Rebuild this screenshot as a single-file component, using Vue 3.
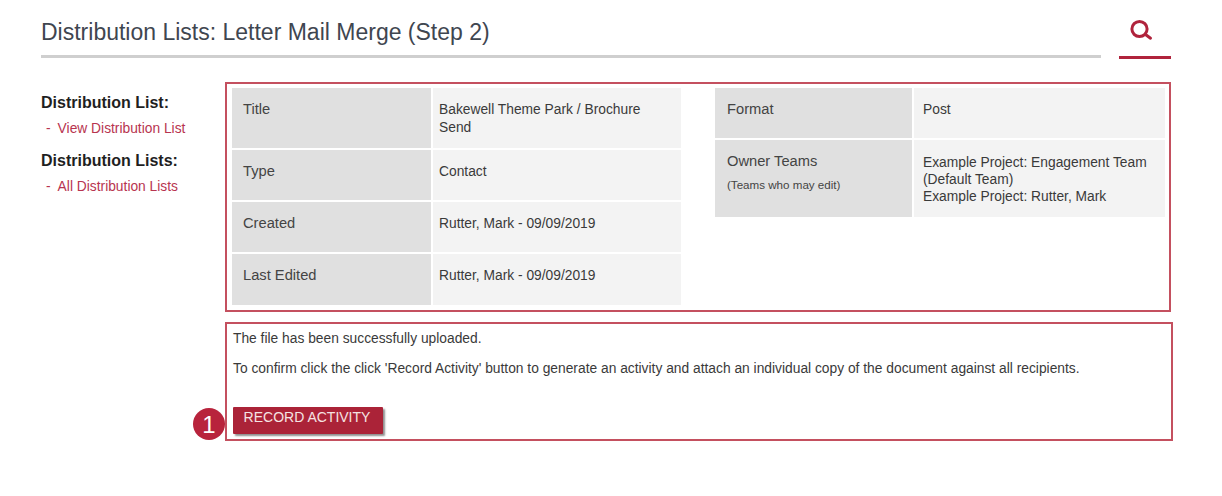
<script setup>
const leftRows = [
  { label: 'Title', value: ['Bakewell Theme Park / Brochure', 'Send'], height: 60 },
  { label: 'Type', value: ['Contact'], height: 50 },
  { label: 'Created', value: ['Rutter, Mark - 09/09/2019'], height: 50 },
  { label: 'Last Edited', value: ['Rutter, Mark - 09/09/2019'], height: 51 },
];
const rightRows = [
  { label: 'Format', value: ['Post'], height: 50 },
  {
    label: 'Owner Teams',
    note: '(Teams who may edit)',
    value: ['Example Project: Engagement Team', '(Default Team)', 'Example Project: Rutter, Mark'],
    height: 77,
  },
];
const sideGroups = [
  { title: 'Distribution List:', link: 'View Distribution List' },
  { title: 'Distribution Lists:', link: 'All Distribution Lists' },
];
</script>

<template>
  <div class="page">
    <header class="head">
      <h1 class="title">Distribution Lists: Letter Mail Merge (Step 2)</h1>
      <div class="search">
        <svg width="24" height="22" viewBox="0 0 24 22" fill="none" stroke="#b0233c" stroke-linecap="round">
          <circle cx="10.5" cy="10" r="7.6" stroke-width="3" />
          <path d="M16.5 15.5l5 3.7" stroke-width="3" />
        </svg>
      </div>
    </header>

    <div class="body">
      <aside class="side">
        <div v-for="g in sideGroups" :key="g.title" class="side-group">
          <div class="side-title">{{ g.title }}</div>
          <div class="side-link"><span class="dash">-</span>{{ g.link }}</div>
        </div>
      </aside>

      <main class="main">
        <section class="box details">
          <div class="table">
            <div v-for="r in leftRows" :key="r.label" class="row" :style="{ height: r.height + 'px' }">
              <div class="label">{{ r.label }}</div>
              <div class="value"><div v-for="l in r.value" :key="l">{{ l }}</div></div>
            </div>
          </div>
          <div class="table">
            <div v-for="r in rightRows" :key="r.label" class="row" :style="{ height: r.height + 'px' }">
              <div class="label">
                {{ r.label }}
                <div v-if="r.note" class="note">{{ r.note }}</div>
              </div>
              <div class="value"><div v-for="l in r.value" :key="l">{{ l }}</div></div>
            </div>
          </div>
        </section>

        <section class="box confirm">
          <p class="msg">The file has been successfully uploaded.</p>
          <p class="msg second">To confirm click the click 'Record Activity' button to generate an activity and attach an individual copy of the document against all recipients.</p>
          <div class="action">
            <span class="badge">1</span>
            <button class="record">RECORD ACTIVITY</button>
          </div>
        </section>
      </main>
    </div>
  </div>
</template>

<style>
html, body {
  background: #fff;
}
</style>

<style scoped>
.page {
  width: 1222px;
  height: 496px;
  box-sizing: border-box;
  padding: 0 51px 0 41px;
  font-family: "Liberation Sans", Arial, sans-serif;
  font-size: 13.8px;
  color: #3a3a3a;
  overflow: hidden;
}

.head {
  display: flex;
  justify-content: space-between;
  height: 59px;
}

.title {
  flex: 0 0 1060px;
  box-sizing: border-box;
  height: 58px;
  margin: 0;
  padding-top: 19px;
  border-bottom: 3px solid #cfcfcf;
  font-size: 23px;
  font-weight: 400;
  line-height: 26px;
  color: #3f4650;
  white-space: nowrap;
}

.search {
  flex: 0 0 52px;
  box-sizing: border-box;
  height: 59px;
  padding-top: 19px;
  padding-right: 8px;
  border-bottom: 3px solid #b0233c;
  text-align: center;
}

.body {
  display: flex;
  padding-top: 23px;
}

.side {
  flex: 0 0 184px;
  padding-top: 12px;
}

.side-group {
  margin-bottom: 16px;
}

.side-title {
  font-size: 16px;
  font-weight: 700;
  line-height: 18px;
  color: #1f1f1f;
}

.side-link {
  margin-top: 10px;
  padding-left: 5px;
  line-height: 14px;
  color: #b8344f;
}

.dash {
  margin-right: 7px;
}

.main {
  flex: 0 0 948px;
  display: flex;
  flex-direction: column;
  gap: 10px;
}

.box {
  box-sizing: border-box;
  border: 2px solid #c4505f;
}

.details {
  width: 946px;
  height: 230px;
  display: flex;
  justify-content: space-between;
  padding: 4px 4px 0 5px;
}

.table {
  width: 449px;
  display: flex;
  flex-direction: column;
  gap: 2px;
}

.details .table:last-child {
  width: 450px;
}

.row {
  display: flex;
  gap: 2px;
  line-height: 18px;
}

.label {
  flex: 0 0 199px;
  box-sizing: border-box;
  padding: 12px 11px 0;
  background: #e0e0e0;
  font-size: 14.7px;
  color: #444;
}

.details .table:last-child .label {
  flex-basis: 197px;
  padding-left: 12px;
}

.note {
  margin-top: 7px;
  font-size: 11.6px;
  line-height: 16px;
}

.value {
  flex: 1;
  box-sizing: border-box;
  padding: 13px 6px 0;
  background: #f3f3f3;
  line-height: 18px;
  white-space: nowrap;
}

.details .table:last-child .value {
  padding-left: 9px;
}

.details .table:last-child .row:last-child .value {
  padding-top: 14px;
  line-height: 17px;
}

.confirm {
  width: 948px;
  height: 119px;
  padding: 6px 6px 0;
}

.msg {
  margin: 0;
  line-height: 18px;
  white-space: nowrap;
}

.second {
  margin-top: 12px;
}

.action {
  position: relative;
  margin-top: 29px;
}

.record {
  display: block;
  width: 150px;
  height: 27px;
  padding: 0 2px 7px 0;
  border: 0;
  border-radius: 1px;
  background: #ab2338;
  box-shadow: 2px 2px 2px #8f8f8f;
  font-family: inherit;
  font-size: 14px;
  color: #f5e3e3;
}

.badge {
  position: absolute;
  left: -40px;
  top: 1px;
  width: 32px;
  height: 32px;
  border-radius: 50%;
  background: #b8233c;
  color: #fff;
  font-size: 24px;
  line-height: 33px;
  text-align: center;
}
</style>
